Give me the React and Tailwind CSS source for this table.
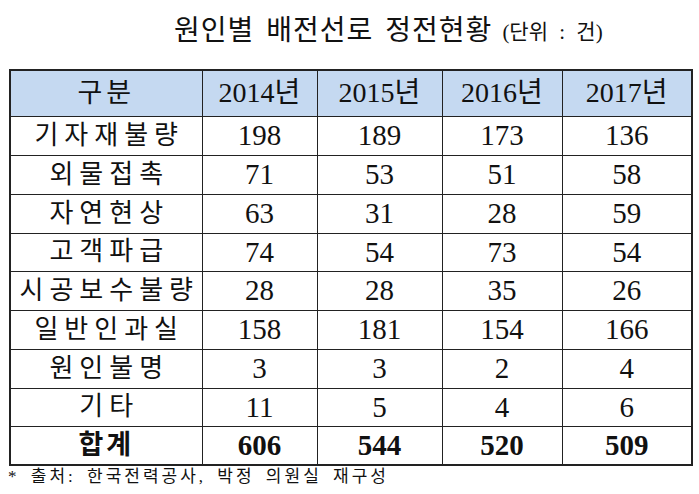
const years = ["2014년", "2015년", "2016년", "2017년"];

const rows = [
  { label: "기자재불량", values: [198, 189, 173, 136], h: "h-[39px]" },
  { label: "외물접촉", values: [71, 53, 51, 58], h: "h-[39px]" },
  { label: "자연현상", values: [63, 31, 28, 59], h: "h-[39px]" },
  { label: "고객파급", values: [74, 54, 73, 54], h: "h-[38px]" },
  { label: "시공보수불량", values: [28, 28, 35, 26], h: "h-[39px]" },
  { label: "일반인과실", values: [158, 181, 154, 166], h: "h-[39px]" },
  { label: "원인불명", values: [3, 3, 2, 4], h: "h-[39px]" },
  { label: "기타", values: [11, 5, 4, 6], h: "h-[38px]" },
];

const total = { label: "합계", values: [606, 544, 520, 509] };

const serif = { fontFamily: '"Liberation Serif", "Noto Sans CJK KR", serif' };

export default function App() {
  return (
    <div className="w-[699px] h-[494px] bg-white text-[#111] overflow-hidden" style={serif}>
      <div className="h-[69px] flex items-center pl-[174px] pb-[8px]">
        <span className="text-[28px] leading-none tracking-[1px] [word-spacing:4px]">원인별 배전선로 정전현황</span>
        <span className="text-[21px] leading-none ml-[10px] pt-[4px] [word-spacing:6px]">(단위 : 건)</span>
      </div>
      <div className="pl-[9px]">
        <table className="table-fixed border-collapse border-2 border-[#222] w-[682px] leading-none">
          <colgroup>
            <col className="w-[192px]" />
            <col className="w-[115px]" />
            <col className="w-[125px]" />
            <col className="w-[120px]" />
            <col className="w-[130px]" />
          </colgroup>
          <thead>
            <tr className="h-[46px] bg-[#c5d9f1]">
              <th className="border border-[#222] p-0 font-normal text-[27px] tracking-[4px]">구분</th>
              {years.map((y) => (
                <th key={y} className="border border-[#222] p-0 font-normal text-[28px]">
                  {y}
                </th>
              ))}
            </tr>
          </thead>
          <tbody>
            {rows.map((r) => (
              <tr key={r.label} className={r.h}>
                <td className="border border-[#222] p-0 text-center text-[26px] tracking-[6px] pl-[6px]">{r.label}</td>
                {r.values.map((v, i) => (
                  <td key={i} className="border border-[#222] p-0 text-center text-[29px]">
                    {v}
                  </td>
                ))}
              </tr>
            ))}
            <tr className="h-[39px]">
              <td className="border border-[#222] p-0 text-center text-[27px] font-bold tracking-[3px]">{total.label}</td>
              {total.values.map((v, i) => (
                <td key={i} className="border border-[#222] p-0 text-center text-[29px] font-bold">
                  {v}
                </td>
              ))}
            </tr>
          </tbody>
        </table>
      </div>
      <div className="pl-[8px] pt-[1px] text-[17px] tracking-[3px] [word-spacing:4px] leading-[20px]">
        * 출처: 한국전력공사, 박정 의원실 재구성
      </div>
    </div>
  );
}
